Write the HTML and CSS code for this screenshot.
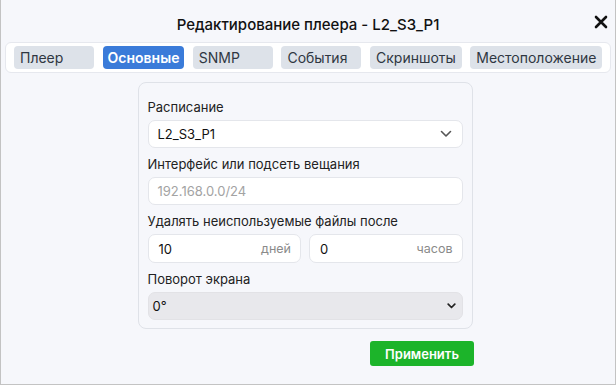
FILE: index.html
```html
<!DOCTYPE html>
<html lang="ru">
<head>
<meta charset="utf-8">
<link rel="stylesheet" href="styles.css">
</head>
<body>
<div class="dialog">
  <header class="head">
    <h1 class="title">Редактирование плеера - L2_S3_P1</h1>
    <button class="close" aria-label="Закрыть">
      <svg width="14" height="14" viewBox="0 0 14 14"><path d="M2 2 L12 12 M12 2 L2 12" stroke="#111" stroke-width="2.6" stroke-linecap="round"/></svg>
    </button>
  </header>
  <nav class="tabs">
    <span class="tab">Плеер</span>
    <span class="tab active">Основные</span>
    <span class="tab">SNMP</span>
    <span class="tab">События</span>
    <span class="tab">Скриншоты</span>
    <span class="tab">Местоположение</span>
  </nav>
  <main class="content">
    <form class="card">
      <div class="group">
        <label class="label">Расписание</label>
        <div class="control select">
          <span>L2_S3_P1</span>
          <svg width="12" height="8" viewBox="0 0 12 8"><path d="M1.5 1.5 L6 6 L10.5 1.5" fill="none" stroke="#555" stroke-width="1.6" stroke-linecap="round" stroke-linejoin="round"/></svg>
        </div>
      </div>
      <div class="group">
        <label class="label">Интерфейс или подсеть вещания</label>
        <div class="control"><span class="placeholder">192.168.0.0/24</span></div>
      </div>
      <div class="group">
        <label class="label">Удалять неиспользуемые файлы после</label>
        <div class="pair">
          <div class="control num"><span class="val">10</span><span class="unit">дней</span></div>
          <div class="control num"><span class="val">0</span><span class="unit">часов</span></div>
        </div>
      </div>
      <div class="group">
        <label class="label">Поворот экрана</label>
        <div class="control native">
          <span>0°</span>
          <svg width="9" height="6" viewBox="0 0 9 6"><path d="M1.2 1.2 L4.5 4.5 L7.8 1.2" fill="none" stroke="#222" stroke-width="1.7" stroke-linecap="round" stroke-linejoin="round"/></svg>
        </div>
      </div>
    </form>
    <div class="actions">
      <button class="apply" type="button">Применить</button>
    </div>
  </main>
</div>
</body>
</html>
```

FILE: styles.css
```css
* { box-sizing: border-box; }
html, body { margin: 0; padding: 0; }
body {
  width: 616px;
  height: 385px;
  font-family: Inter, "Noto Sans", sans-serif;
  color: #1d1d1f;
  background: #f6f7fb;
}
.dialog {
  position: relative;
  width: 616px;
  height: 385px;
  border: 1px solid #c3c3c3;
  border-top: none;
  background: #f6f7fb;
  display: flex;
  flex-direction: column;
}
.head {
  height: 42px;
  padding-top: 16px;
  text-align: center;
}
.title {
  margin: 0;
  font-size: 15px;
  line-height: 18px;
  font-weight: 500;
  color: #111;
}
.close {
  position: absolute;
  right: 6px;
  top: 14px;
  width: 16px;
  height: 16px;
  padding: 1px;
  border: 0;
  background: transparent;
  display: flex;
}
.tabs {
  margin: 0 4px;
  height: 31px;
  padding: 3px 8px;
  background: #fff;
  border: 1px solid #e6e8ee;
  border-radius: 6px;
  display: flex;
  gap: 8.6px;
}
.tab {
  min-width: 80px;
  height: 23px;
  padding: 0 6px;
  border-radius: 4px;
  background: #dde2e9;
  color: #2f3742;
  font-size: 14px;
  line-height: 23px;
  white-space: nowrap;
}
.tab.active {
  background: #3a7bd9;
  color: #fff;
  font-weight: 600;
  text-align: center;
  padding: 0 5px;
}
.content {
  display: flex;
  flex-direction: column;
  align-items: center;
  padding: 9px 6px 0 0;
}
.card {
  width: 335px;
  margin: 0;
  padding: 16px 9px 8px;
  background: #f6f7fb;
  border: 1px solid #dfe2e8;
  border-radius: 8px;
  display: flex;
  flex-direction: column;
  gap: 8px;
}
.group {
  display: flex;
  flex-direction: column;
  gap: 4px;
}
.label {
  font-size: 13px;
  line-height: 17px;
  color: #222;
}
.control {
  height: 28px;
  background: #fff;
  border: 1px solid #e4e6eb;
  border-radius: 7px;
  padding: 0 9px;
  display: flex;
  align-items: center;
  justify-content: space-between;
  font-size: 13px;
  color: #111;
}
.control.select svg { margin-right: 1px; }
.placeholder { color: #a3a3a3; }
.pair {
  display: flex;
  gap: 8px;
}
.pair .control { flex: 1; height: 29px; }
.num .val { padding-left: 1px; }
.unit { color: #8a8a8a; font-size: 12.5px; }
.control.native {
  background: #e8e8ec;
  border-color: #e2e2e6;
  padding: 0 6px 0 4px;
}
.actions {
  width: 337px;
  display: flex;
  justify-content: flex-end;
  margin-top: 12px;
  margin-left: 1px;
}
.apply {
  width: 104px;
  height: 25px;
  border: 0;
  border-radius: 3px;
  background: #1cb42a;
  color: #fff;
  font-family: Inter, "Noto Sans", sans-serif;
  font-size: 13px;
  font-weight: 600;
}
```
